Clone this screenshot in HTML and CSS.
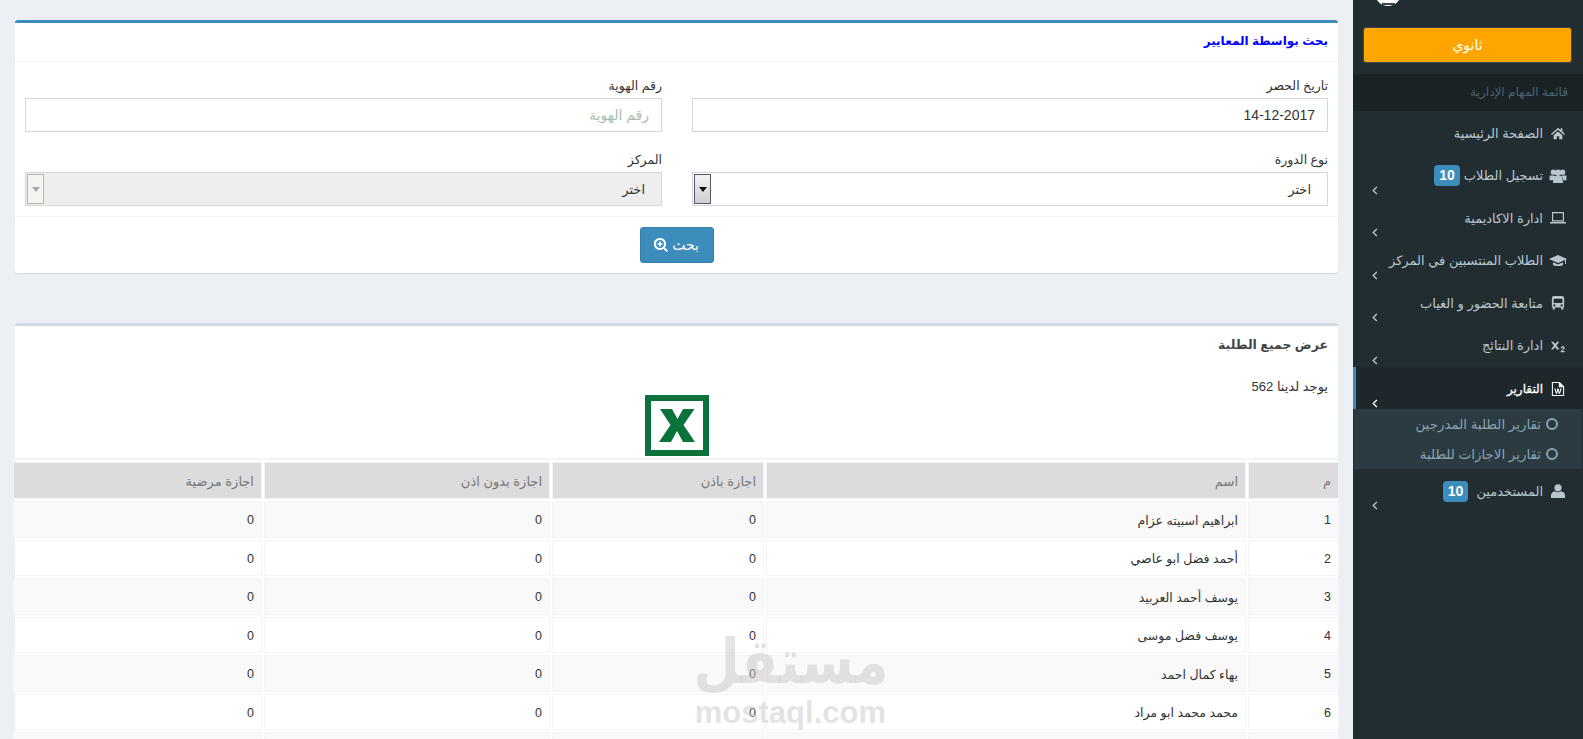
FILE: index.html
```html
<!DOCTYPE html>
<html lang="ar" dir="rtl">
<head>
    <meta charset="UTF-8">
    <title>عرض جميع الطلبة</title>
    <link rel="stylesheet" href="styles.css">
</head>
<body>

<aside class="sidebar">
    <div class="logoStrip"><div class="logo"><span class="logoMark"></span></div></div>
    <div class="levelWrap"><button type="button" class="levelBtn">ثانوي</button></div>
    <div class="menuHeader">قائمة المهام الإدارية</div>

    <ul class="menu">
        <li class="item">
            <a href="#" class="itemRow">
                <svg class="ico" viewBox="0 0 16 14"><path d="M8 1 0 8l1 1.2L8 3.2l7 6L16 8l-3-2.6V1.500h-2v2.200zM3 9.600V14h3.600v-3.400h2.800V14H13V9.600L8 5.200z"/></svg>
                <span>الصفحة الرئيسية</span>
            </a>
        </li>
        <li class="item">
            <a href="#" class="itemRow">
                <svg class="ico icoWide" viewBox="0 0 18 15"><circle cx="4" cy="3.400" r="2.800"/><circle cx="14" cy="3.400" r="2.800"/><circle cx="9" cy="4" r="3.400"/><path d="M0 7h5l-.5 5H0zM18 7h-5l.5 5H18zM4.500 7.500h9l1 7.500h-11z"/></svg>
                <span>تسجيل الطلاب</span><span class="badge badgeNear">10</span>
            </a>
            <div class="chevron"><svg viewBox="0 0 6 10"><path d="M5 1 1 5l4 4"/></svg></div>
        </li>
        <li class="item">
            <a href="#" class="itemRow">
                <svg class="ico icoWide" viewBox="0 0 18 14"><path fill-rule="evenodd" d="M3 1h12v9.500H3zm1.200 1.200v7.100h9.600V2.200zM1 11h16v1.500H1z"/></svg>
                <span>ادارة الاكاديمية</span>
            </a>
            <div class="chevron"><svg viewBox="0 0 6 10"><path d="M5 1 1 5l4 4"/></svg></div>
        </li>
        <li class="item">
            <a href="#" class="itemRow">
                <svg class="ico icoWide" viewBox="0 0 18 14"><path d="M9 1 0 5l9 4 7-3.100V10h1V5.400L18 5zM4 8.200V11c1.500 1.300 8.500 1.300 10 0V8.200L9 10.400z"/></svg>
                <span>الطلاب المنتسبين في المركز</span>
            </a>
            <div class="chevron"><svg viewBox="0 0 6 10"><path d="M5 1 1 5l4 4"/></svg></div>
        </li>
        <li class="item">
            <a href="#" class="itemRow">
                <svg class="ico" viewBox="0 0 14 16"><path fill-rule="evenodd" d="M3 0h8c1.700 0 3 .8 3 2v11h-1v2.500h-2.500V13h-7v2.500H1V13H0V2C0 .8 1.300 0 3 0zM2 3v5h10V3zm.8 6.500a1.300 1.300 0 1 0 0 2.600 1.300 1.300 0 0 0 0-2.600zm8.400 0a1.300 1.300 0 1 0 0 2.600 1.300 1.300 0 0 0 0-2.600z"/></svg>
                <span>متابعة الحضور و الغياب</span>
            </a>
            <div class="chevron"><svg viewBox="0 0 6 10"><path d="M5 1 1 5l4 4"/></svg></div>
        </li>
        <li class="item">
            <a href="#" class="itemRow">
                <svg class="ico" viewBox="0 0 16 14"><path d="M0 2h2.800l2 2.800L6.800 2h2.700L6.200 6.500 9.700 11H6.900L4.700 8 2.500 11H0l3.400-4.500zM11 9.300c.2-1.300 1.200-1.900 2.400-1.900s2.300.6 2.300 1.800c0 1.700-2.600 2.400-3 3.400h3V14H11c0-2.600 3.100-3.300 3.100-4.700 0-.8-1.300-.8-1.500.2z"/></svg>
                <span>ادارة النتائج</span>
            </a>
            <div class="chevron"><svg viewBox="0 0 6 10"><path d="M5 1 1 5l4 4"/></svg></div>
        </li>
        <li class="item active">
            <a href="#" class="itemRow">
                <svg class="ico" viewBox="0 0 14 16"><path fill-rule="evenodd" d="M0 0h9l5 5v11H0zm1.200 1.200v13.600h11.600V6H8V1.200zM2.800 7.500h1.500l1 4.200 1-4.200h1.400l1 4.200 1-4.200h1.500L9.300 13.500H8L7 9.700l-1 3.800H4.700z"/></svg>
                <span>التقارير</span>
            </a>
            <div class="chevron"><svg viewBox="0 0 6 10"><path d="M5 1 1 5l4 4"/></svg></div>
        </li>
        <li class="subMenu">
            <a href="#" class="subRow"><span class="ring"></span><span>تقارير الطلبة المدرجين</span></a>
            <a href="#" class="subRow"><span class="ring"></span><span>تقارير الاجازات للطلبة</span></a>
        </li>
        <li class="item">
            <a href="#" class="itemRow">
                <svg class="ico" viewBox="0 0 14 14"><circle cx="7" cy="3.800" r="3.600"/><path d="M0 14v-2.500C0 9 2 7.500 3.800 7.200c1.800 1.300 4.600 1.300 6.400 0C12 7.500 14 9 14 11.500V14z"/></svg>
                <span>المستخدمين</span><span class="badge">10</span>
            </a>
            <div class="chevron"><svg viewBox="0 0 6 10"><path d="M5 1 1 5l4 4"/></svg></div>
        </li>
    </ul>
</aside>

<main class="content">

    <section class="card cardBlue">
        <h3 class="cardHead titleBlue">بحث بواسطة المعايير</h3>
        <form class="searchForm">
            <div class="field">
                <label for="dateInput">تاريخ الحصر</label>
                <input type="text" id="dateInput" class="ctl" value="14-12-2017">
            </div>
            <div class="field">
                <label for="idInput">رقم الهوية</label>
                <input type="text" id="idInput" class="ctl" placeholder="رقم الهوية">
            </div>
            <div class="field">
                <label for="courseSel">نوع الدورة</label>
                <div class="selectBox">
                    <select id="courseSel"><option>اختر</option></select>
                    <span class="selArrow"></span>
                </div>
            </div>
            <div class="field">
                <label for="centerSel">المركز</label>
                <div class="selectBox off">
                    <select id="centerSel" disabled><option>اختر</option></select>
                    <span class="selArrow"></span>
                </div>
            </div>
        </form>
        <div class="cardFoot">
            <button type="button" class="searchBtn">بحث
                <svg viewBox="0 0 14 14"><path fill-rule="evenodd" d="M6 0a6 6 0 0 1 4.800 9.600L14 12.800 12.500 14l-3.200-3.200A6 6 0 1 1 6 0zm0 2a4 4 0 1 0 0 8 4 4 0 0 0 0-8zM5.200 3.500h1.600v1.700h1.700v1.600H6.800v1.700H5.200V6.800H3.500V5.200h1.700z"/></svg>
            </button>
        </div>
    </section>

    <section class="card cardGrey">
        <h3 class="cardTitle">عرض جميع الطلبة</h3>
        <p class="countLine">يوجد لدينا 562</p>
        <div class="excelRow">
            <svg class="excelIco" viewBox="0 0 64 61">
                <path fill="#0b723b" fill-rule="evenodd" d="M0 0h64v61H0zm6 6v49h52V6z"/>
                <path fill="#0b723b" d="M15 14h12l5.500 10L38 14h11.500L38.500 30 50 47H38l-6-11-6 11H14l11.500-17z"/>
            </svg>
        </div>
        <table class="students">
            <colgroup>
                <col class="colNo"><col class="colName"><col class="colLeave"><col class="colAbsent"><col class="colSick">
            </colgroup>
            <thead>
                <tr><th>م</th><th>اسم</th><th>اجازة باذن</th><th>اجازة بدون اذن</th><th>اجازة مرضية</th></tr>
            </thead>
            <tbody>
                <tr><td>1</td><td>ابراهيم اسبيته عزام</td><td>0</td><td>0</td><td>0</td></tr>
                <tr><td>2</td><td>أحمد فضل ابو عاصي</td><td>0</td><td>0</td><td>0</td></tr>
                <tr><td>3</td><td>يوسف أحمد العربيد</td><td>0</td><td>0</td><td>0</td></tr>
                <tr><td>4</td><td>يوسف فضل موسى</td><td>0</td><td>0</td><td>0</td></tr>
                <tr><td>5</td><td>بهاء كمال احمد</td><td>0</td><td>0</td><td>0</td></tr>
                <tr><td>6</td><td>محمد محمد ابو مراد</td><td>0</td><td>0</td><td>0</td></tr>
                <tr><td></td><td></td><td></td><td></td><td></td></tr>
            </tbody>
        </table>
    </section>

</main>

<div class="watermark">
    <div class="wmAr">مستقل</div>
    <div class="wmEn">mostaql.com</div>
</div>

</body>
</html>
```

FILE: styles.css
```css
* {
    box-sizing: border-box;
}

html, body {
    height: 100%;
    margin: 0;
    overflow: hidden;
}

body {
    display: flex;
    background-color: #ecf0f5;
    color: #333;
    font-family: "Liberation Sans", "DejaVu Sans", sans-serif;
    font-size: 13px;
}

a {
    color: inherit;
    text-decoration: none;
}

/* sidebar */
.sidebar {
    width: 230px;
    flex: none;
    background-color: #222d32;
    color: #b8c7ce;
}

.logoStrip {
    height: 27px;
    overflow: hidden;
    padding-right: 182px;
}

.logo {
    width: 26px;
    height: 26px;
    margin-top: -20px;
    border-radius: 50%;
    background-color: #fff;
    display: flex;
    justify-content: center;
    align-items: flex-end;
    padding-bottom: 1px;
}

.logoMark {
    width: 13px;
    height: 2px;
    background-color: #444;
}

.levelWrap {
    padding: 0 11px 11px 10px;
}

.levelBtn {
    width: 100%;
    height: 36px;
    display: block;
    background-color: #ffa500;
    border: 1px solid #3a4a52;
    border-radius: 3px;
    color: #fff;
    font-family: inherit;
    font-size: 14px;
}

.menuHeader {
    height: 37px;
    line-height: 37px;
    padding-right: 15px;
    background-color: #1a2226;
    color: #4b646f;
    font-size: 12px;
}

.menu {
    list-style: none;
    margin: 0;
    padding: 0;
}

.item {
    height: 42.6px;
    padding-top: 12px;
}

.itemRow {
    display: flex;
    align-items: center;
    height: 20px;
    padding-right: 18px;
    gap: 8px;
}

.ico {
    width: 14px;
    height: 14px;
    flex: none;
    fill: currentColor;
}

.icoWide {
    width: 18px;
    margin: 0 -2px;
}

.badge {
    background-color: #3c8dbc;
    color: #fff;
    border-radius: 4px;
    padding: 3px 5px;
    font-size: 14px;
    font-weight: bold;
    line-height: 15px;
}

.badgeNear {
    margin-right: -4px;
}

.chevron {
    height: 10.6px;
    display: flex;
    padding-right: 205px;
}

.chevron svg {
    width: 6px;
    height: 9px;
    fill: none;
    stroke: currentColor;
    stroke-width: 1.5;
}

.item.active {
    background-color: #1e282c;
    color: #fff;
    font-size: 12px;
    -webkit-text-stroke: 0.3px #fff;
    position: relative;
}

.item.active::after {
    content: "";
    position: absolute;
    top: 0;
    bottom: 0;
    left: 0;
    width: 3px;
    background-color: #3c8dbc;
}

.subMenu {
    background-color: #2c3b41;
    margin: 0 1px;
    color: #8aa4af;
    font-size: 13.4px;
}

.subRow {
    display: flex;
    align-items: center;
    height: 30px;
    padding-right: 24px;
    gap: 5px;
}

.ring {
    width: 12px;
    height: 12px;
    flex: none;
    border: 2px solid currentColor;
    border-radius: 50%;
}

/* main area */
.content {
    flex: 1;
    padding: 20px 15px 0;
    min-width: 0;
}

.card {
    background-color: #fff;
    border-top: 3px solid #d2d6de;
    border-radius: 3px;
    box-shadow: 0 1px 1px rgba(0, 0, 0, 0.1);
}

.cardBlue {
    border-top-color: #3c8dbc;
    height: 253px;
    margin-bottom: 50px;
}

.cardHead {
    margin: 0;
    height: 39px;
    line-height: 37px;
    padding: 0 10px;
    border-bottom: 1px solid #f4f4f4;
    font-size: 12px;
}

.titleBlue {
    color: #00f;
}

.searchForm {
    display: grid;
    grid-template-columns: 636px 637px;
    column-gap: 30px;
    row-gap: 18px;
    padding: 14px 10px 10px;
    border-bottom: 1px solid #f4f4f4;
}

.field label {
    display: block;
    height: 22px;
    line-height: 20px;
    font-size: 12.5px;
}

.ctl {
    display: block;
    width: 100%;
    height: 34px;
    padding: 0 12px;
    border: 1px solid #d2d6de;
    font-family: inherit;
    font-size: 14px;
    color: #333;
    background-color: #fff;
}

.ctl::placeholder {
    color: #a9bda9;
}

.selectBox {
    display: flex;
    align-items: center;
    height: 34px;
    border: 1px solid #d2d6de;
    padding-left: 1px;
    background-color: #fff;
}

.selectBox select {
    flex: 1;
    min-width: 0;
    height: 100%;
    border: 0;
    padding: 0 16px;
    appearance: none;
    background: transparent;
    font-family: inherit;
    font-size: 13px;
    color: #333;
    opacity: 1;
}

.selArrow {
    width: 17px;
    height: 30px;
    flex: none;
    order: 2;
    border: 1px solid #55556b;
    background: linear-gradient(#f3f3f3, #cfcfcf);
    display: flex;
    align-items: center;
    justify-content: center;
}

.selArrow::before {
    content: "";
    border: 4px solid transparent;
    border-top: 5px solid #111;
    border-bottom: 0;
}

.selectBox.off {
    background-color: #eee;
}

.selectBox.off .selArrow {
    border-color: #b8b8a8;
    background: #f4f4f0;
}

.selectBox.off .selArrow::before {
    border-top-color: #aaa;
}

.cardFoot {
    display: flex;
    justify-content: center;
    padding-top: 10px;
}

.searchBtn {
    width: 74px;
    height: 36px;
    display: flex;
    align-items: center;
    justify-content: center;
    gap: 4px;
    background-color: #3c8dbc;
    border: 1px solid #367fa9;
    border-radius: 3px;
    color: #fff;
    font-family: inherit;
    font-size: 14px;
}

.searchBtn svg {
    width: 14px;
    height: 14px;
    fill: currentColor;
}

.cardTitle {
    margin: 0;
    padding: 9px 10px 0;
    height: 51px;
    line-height: 20px;
    font-size: 12.5px;
    color: #444;
}

.countLine {
    margin: 0;
    padding: 0 10px;
    height: 18px;
    line-height: 20px;
    font-size: 13px;
}

.excelRow {
    height: 65px;
    padding-right: 629px;
    border-bottom: 2px solid #f4f4f4;
}

.excelIco {
    display: block;
    width: 64px;
    height: 61px;
}

.students {
    table-layout: fixed;
    border-collapse: separate;
    border-spacing: 2px;
    width: calc(100% + 7px);
    margin-right: -3px;
    font-size: 12.5px;
}

.colNo { width: 91px; }
.colName { width: 480px; }
.colLeave { width: 212px; }
.colAbsent { width: 286px; }

.students th {
    height: 37px;
    padding: 2px 7px 0;
    border: 1px solid #f4f4f4;
    background-color: #dcdcdc;
    color: #777;
    font-weight: normal;
    text-align: right;
    font-size: 13px;
}

.students td {
    height: 36.5px;
    padding: 2px 7px 0;
    border: 1px solid #f4f4f4;
    text-align: right;
}

.students tbody tr:nth-child(odd) td {
    background-color: #f9f9f9;
}

/* watermark over the page */
.watermark {
    position: absolute;
    left: 696px;
    top: 626px;
    width: 190px;
    text-align: center;
    color: rgba(200, 200, 200, 0.5);
    font-weight: bold;
    pointer-events: none;
}

.wmAr {
    display: flex;
    justify-content: center;
    font-size: 62px;
    line-height: 72px;
    white-space: nowrap;
    transform: scaleX(0.86);
}

.wmEn {
    font-size: 31px;
    line-height: 30px;
}
```
